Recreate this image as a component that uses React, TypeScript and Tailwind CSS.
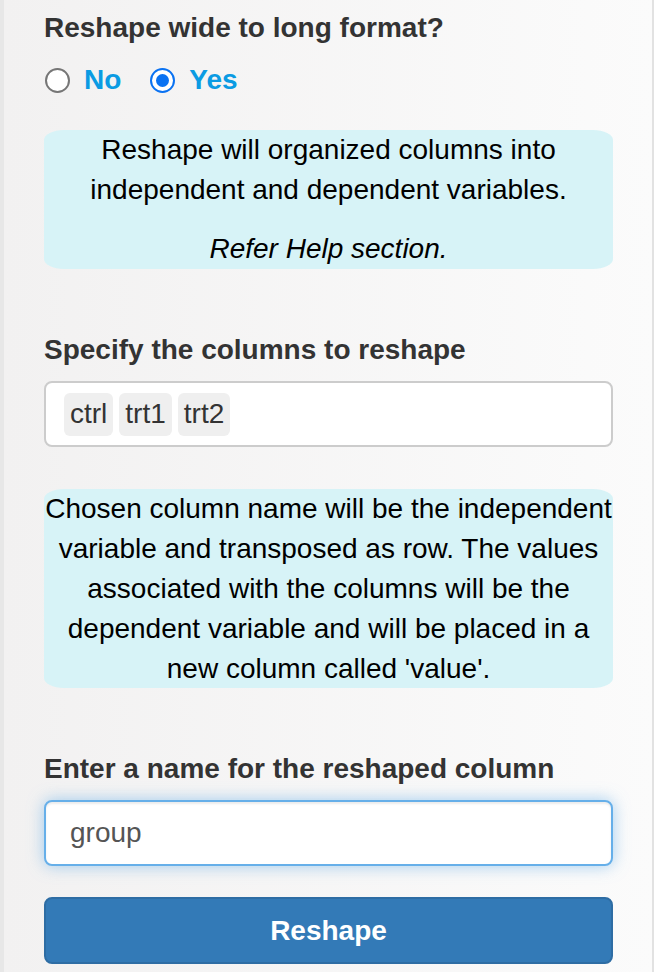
import React from 'react';

const font = "font-['Liberation_Sans',Arial,sans-serif]";

const Radio = ({ checked, label }: { checked?: boolean; label: string }) => (
  <label className="flex items-center gap-[14px]">
    {checked ? (
      <span className="flex h-[25px] w-[25px] items-center justify-center rounded-full border-[2.5px] border-[#0a72f2] bg-white">
        <span className="h-[13px] w-[13px] rounded-full bg-[#0a72f2]" />
      </span>
    ) : (
      <span className="h-[25px] w-[25px] rounded-full border-2 border-[#767676] bg-white" />
    )}
    <span className="text-[28px] font-bold leading-[40px] text-[#0b9be3]">{label}</span>
  </label>
);

const InfoBox = ({ lines, className = '' }: { lines: string[]; className?: string }) => (
  <div className={`rounded-[20px_/_10px] bg-[#d7f3f7] text-center text-[28px] leading-[40px] text-black ${className}`}>
    {lines.map((l, i) => (
      <div key={i} className="whitespace-nowrap">{l}</div>
    ))}
  </div>
);

export default function App() {
  return (
    <div className={`flex h-[972px] w-[666px] overflow-hidden bg-white ${font}`}>
      <div className="h-full w-[654px] border-l-4 border-r-2 border-l-[#e7e7e7] border-r-[#e2e2e2] bg-gradient-to-r from-[#f2f1f1] to-[#fbfbfb] pl-[40px] pr-[39px] pt-[8px]">
        <h3 className="text-[28px] font-bold leading-[40px] text-[#333]">Reshape wide to long format?</h3>

        <div className="mt-[12px] flex items-center gap-[29px] pl-[1px]">
          <Radio label="No" />
          <Radio checked label="Yes" />
        </div>

        <div className="mt-[30px] h-[139px] rounded-[20px_/_10px] bg-[#d7f3f7] text-center text-[28px] leading-[40px] text-black">
          <p>Reshape will organized columns into</p>
          <p>independent and dependent variables.</p>
          <p className="mt-[19px] italic">Refer Help section.</p>
        </div>

        <h3 className="mt-[61px] text-[28px] font-bold leading-[40px] text-[#333]">Specify the columns to reshape</h3>

        <div className="mt-[11px] flex h-[66px] items-center gap-[6px] rounded-[8px] border-2 border-[#cccccc] bg-white pl-[18px]">
          {['ctrl', 'trt1', 'trt2'].map((c) => (
            <span key={c} className="flex h-[43px] items-center rounded-[6px] bg-[#efefef] px-[6px] text-[28px] text-[#333]">
              {c}
            </span>
          ))}
        </div>

        <InfoBox
          className="mt-[42px] h-[199px]"
          lines={[
            'Chosen column name will be the independent',
            'variable and transposed as row. The values',
            'associated with the columns will be the',
            'dependent variable and will be placed in a',
            "new column called 'value'.",
          ]}
        />

        <h3 className="mt-[61px] text-[28px] font-bold leading-[40px] text-[#333]">Enter a name for the reshaped column</h3>

        <div className="mt-[11px] flex h-[66px] items-center rounded-[8px] border-2 border-[#66afe9] bg-white pl-[24px] text-[28px] text-[#555] shadow-[inset_0_2px_2px_rgba(0,0,0,0.075),0_0_16px_rgba(102,175,233,0.6)]">
          group
        </div>

        <button className="mt-[31px] flex h-[67px] w-full items-center justify-center rounded-[8px] border-2 border-[#2e6da4] bg-[#337ab7] text-[28px] font-bold text-white">
          Reshape
        </button>
      </div>
    </div>
  );
}
